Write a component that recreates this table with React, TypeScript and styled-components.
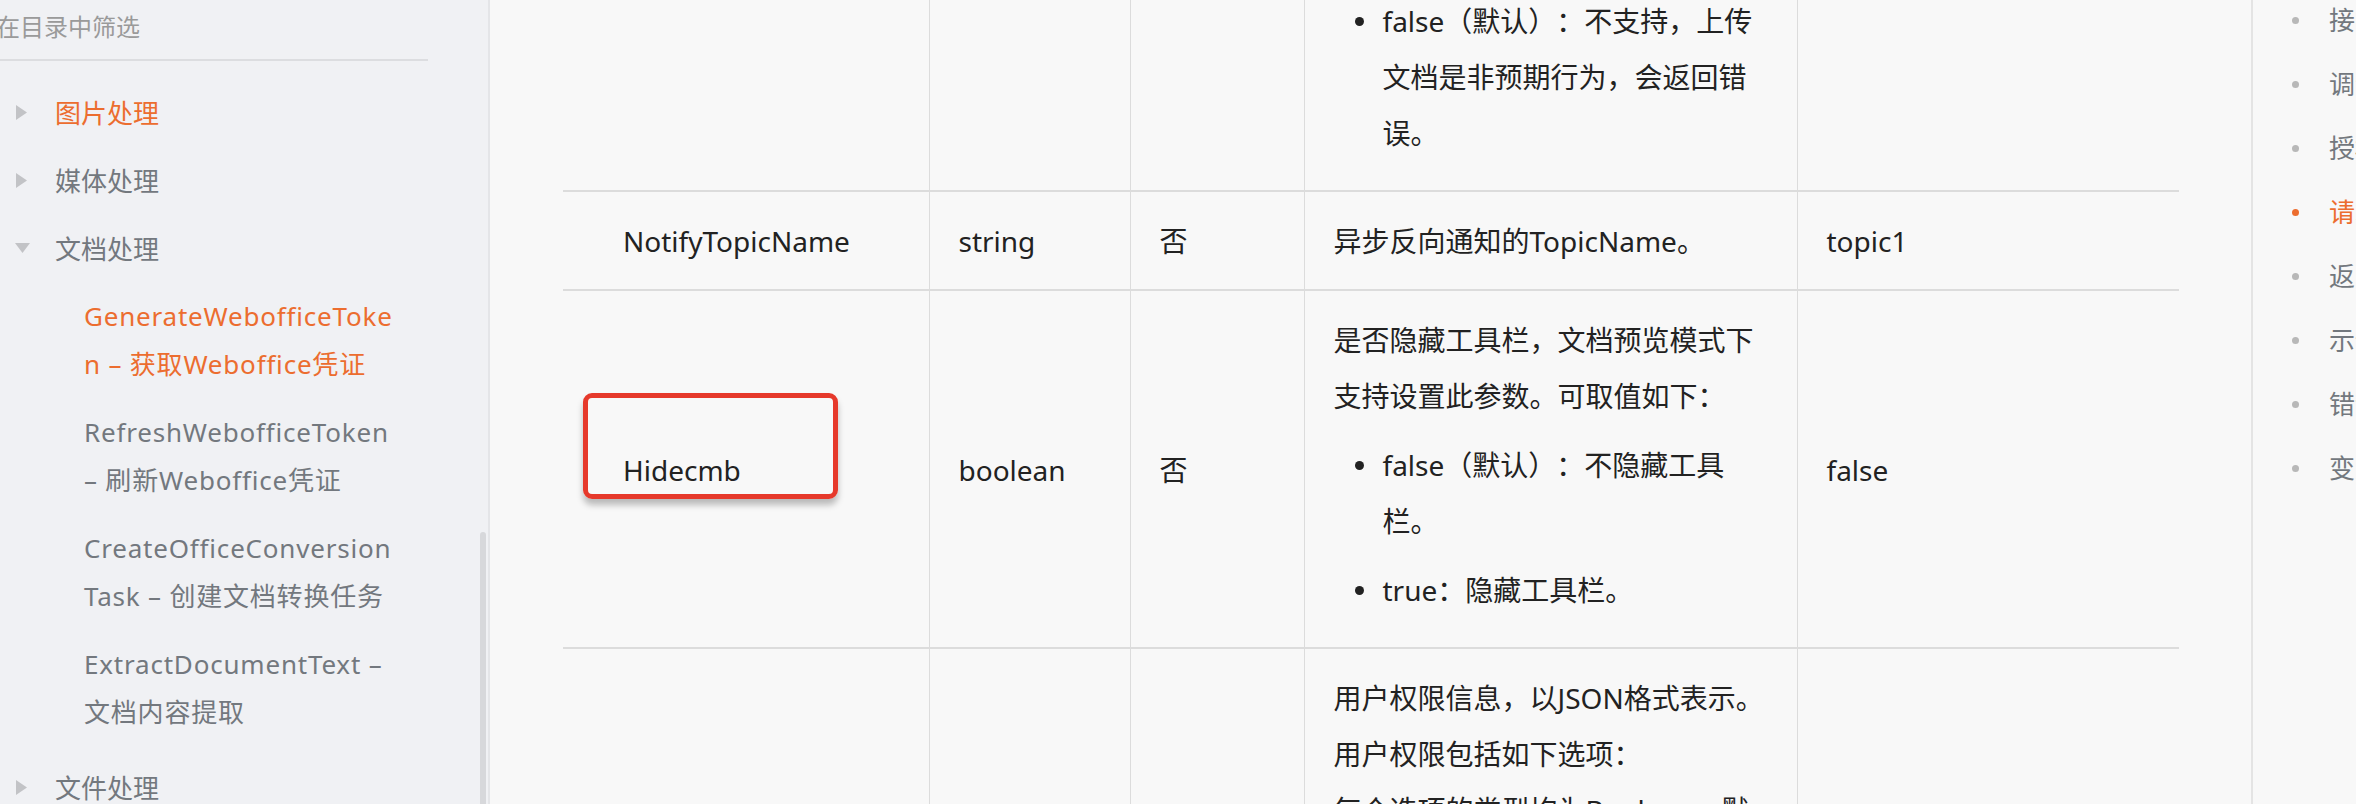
import styled, { createGlobalStyle } from "styled-components";

const GlobalStyle = createGlobalStyle`
    html, body {
        margin: 0;
        padding: 0;
    }
    body {
        font-family: "Noto Sans", "Noto Sans CJK SC", sans-serif;
        background: #f8f8f8;
        text-spacing-trim: space-all;
    }
`;

const ORANGE = "#ec6d2f";

const Page = styled.div`
    display: flex;
    width: 2356px;
    height: 804px;
    overflow: hidden;
    background: #f8f8f8;
`;

const Sidebar = styled.aside`
    position: relative;
    width: 490px;
    flex-shrink: 0;
    box-sizing: border-box;
    padding-right: 60px;
    background: #f0f1f4;
    border-right: 2px solid #e4e5e8;
`;

const Filter = styled.div`
    height: 61px;
    box-sizing: border-box;
    border-bottom: 2px solid #dcdde0;
    font-size: 24px;
    line-height: 54px;
    color: #9a9a9a;
    text-indent: -4px;
    white-space: nowrap;
`;

const Tree = styled.div`
    padding-top: 17px;
`;

const NodeRow = styled.div<{ $active?: boolean }>`
    display: flex;
    align-items: center;
    height: 68px;
    font-size: 26px;
    color: ${(p) => (p.$active ? ORANGE : "#73787e")};
`;

const Arrow = styled.span`
    display: flex;
    align-items: center;
    width: 55px;
    padding-left: 15px;
    box-sizing: border-box;
`;

const SubList = styled.div`
    padding-bottom: 7px;
`;

const SubItem = styled.div<{ $active?: boolean }>`
    padding: 10px 0 10px 84px;
    font-size: 26px;
    line-height: 48px;
    letter-spacing: 0.8px;
    white-space: nowrap;
    color: ${(p) => (p.$active ? ORANGE : "#73787e")};

    span {
        display: block;
    }
`;

const ScrollThumb = styled.div`
    position: absolute;
    right: 2px;
    top: 532px;
    bottom: 0;
    width: 6px;
    border-radius: 3px 3px 0 0;
    background: #d7d8db;
`;

const Main = styled.main`
    flex: 1;
    overflow: hidden;
    padding-left: 73px;
`;

const Table = styled.table`
    width: 1616px;
    margin-top: -41px;
    border-collapse: collapse;
    table-layout: fixed;
`;

const Row = styled.tr`
    border-bottom: 2px solid #dcdcdc;
`;

const Cell = styled.td<{ $first?: boolean }>`
    position: relative;
    vertical-align: middle;
    padding: 21px 29px 20px ${(p) => (p.$first ? "60px" : "29px")};
    font-size: 28px;
    line-height: 56px;
    color: #222;
    border-left: ${(p) => (p.$first ? "none" : "1px solid #dcdcdc")};
`;

const Para = styled.p`
    margin: 0;

    span {
        display: block;
    }
`;

const Bullets = styled.ul`
    list-style: none;
    margin: 13px 0 9px;
    padding-left: 49px;
`;

const Bullet = styled.li`
    position: relative;

    & + & {
        margin-top: 13px;
    }

    span {
        display: block;
    }

    &::before {
        content: "";
        position: absolute;
        left: -28px;
        top: 24px;
        width: 9px;
        height: 9px;
        border-radius: 50%;
        background: #222;
    }
`;

const Highlight = styled.div`
    position: absolute;
    left: 20px;
    top: 102px;
    width: 255px;
    height: 106px;
    box-sizing: border-box;
    border: 5px solid #e6392b;
    border-radius: 9px;
    box-shadow: 0 6px 6px rgba(0, 0, 0, 0.25);
`;

const Toc = styled.nav`
    width: 103px;
    flex-shrink: 0;
    border-left: 2px solid #e4e4e4;
    overflow: hidden;
`;

const TocList = styled.ul`
    list-style: none;
    margin: -12px 0 0;
    padding-left: 76px;
`;

const TocItem = styled.li<{ $active?: boolean }>`
    position: relative;
    font-size: 26px;
    line-height: 64px;
    white-space: nowrap;
    color: ${(p) => (p.$active ? ORANGE : "#73787e")};

    &::before {
        content: "";
        position: absolute;
        left: -37px;
        top: 29px;
        width: 7px;
        height: 7px;
        border-radius: 50%;
        background: ${(p) => (p.$active ? ORANGE : "#b8b8b8")};
    }
`;

const Triangle = ({ open }: { open?: boolean }) =>
    open ? (
        <svg width="15" height="11" viewBox="0 0 15 11">
            <polygon points="0,0 15,0 7.5,10" fill="#c2c3c6" />
        </svg>
    ) : (
        <svg width="12" height="15" viewBox="0 0 12 15" style={{ marginLeft: 1 }}>
            <polygon points="0,0 11,7.5 0,15" fill="#c2c3c6" />
        </svg>
    );

const subItems = [
    { lines: ["GenerateWebofficeToke", "n – 获取Weboffice凭证"], active: true },
    { lines: ["RefreshWebofficeToken", "– 刷新Weboffice凭证"] },
    { lines: ["CreateOfficeConversion", "Task – 创建文档转换任务"] },
    { lines: ["ExtractDocumentText –", "文档内容提取"] },
];

const tocItems = ["接口说明", "调试", "授权信息", "请求参数", "返回数据", "示例", "错误码", "变更历史"];

const App = () => {
    return (
        <Page>
            <GlobalStyle />
            <Sidebar>
                <Filter>在目录中筛选</Filter>
                <Tree>
                    <NodeRow $active>
                        <Arrow>
                            <Triangle />
                        </Arrow>
                        图片处理
                    </NodeRow>
                    <NodeRow>
                        <Arrow>
                            <Triangle />
                        </Arrow>
                        媒体处理
                    </NodeRow>
                    <NodeRow>
                        <Arrow>
                            <Triangle open />
                        </Arrow>
                        文档处理
                    </NodeRow>
                    <SubList>
                        {subItems.map((item) => (
                            <SubItem key={item.lines[0]} $active={item.active}>
                                {item.lines.map((l) => (
                                    <span key={l}>{l}</span>
                                ))}
                            </SubItem>
                        ))}
                    </SubList>
                    <NodeRow>
                        <Arrow>
                            <Triangle />
                        </Arrow>
                        文件处理
                    </NodeRow>
                </Tree>
                <ScrollThumb />
            </Sidebar>

            <Main>
                <Table>
                    <colgroup>
                        <col style={{ width: 366 }} />
                        <col style={{ width: 201 }} />
                        <col style={{ width: 174 }} />
                        <col style={{ width: 493 }} />
                        <col style={{ width: 382 }} />
                    </colgroup>
                    <tbody>
                        <Row>
                            <Cell $first />
                            <Cell />
                            <Cell />
                            <Cell>
                                <Bullets>
                                    <Bullet>
                                        <span>false（默认）：不支持，上传</span>
                                        <span>文档是非预期行为，会返回错</span>
                                        <span>误。</span>
                                    </Bullet>
                                </Bullets>
                            </Cell>
                            <Cell />
                        </Row>
                        <Row>
                            <Cell $first>NotifyTopicName</Cell>
                            <Cell>string</Cell>
                            <Cell>否</Cell>
                            <Cell>异步反向通知的TopicName。</Cell>
                            <Cell>topic1</Cell>
                        </Row>
                        <Row>
                            <Cell $first>
                                Hidecmb
                                <Highlight />
                            </Cell>
                            <Cell>boolean</Cell>
                            <Cell>否</Cell>
                            <Cell>
                                <Para>
                                    <span>是否隐藏工具栏，文档预览模式下</span>
                                    <span>支持设置此参数。可取值如下：</span>
                                </Para>
                                <Bullets>
                                    <Bullet>
                                        <span>false（默认）：不隐藏工具</span>
                                        <span>栏。</span>
                                    </Bullet>
                                    <Bullet>true：隐藏工具栏。</Bullet>
                                </Bullets>
                            </Cell>
                            <Cell>false</Cell>
                        </Row>
                        <Row>
                            <Cell $first />
                            <Cell />
                            <Cell />
                            <Cell>
                                <Para>
                                    <span>用户权限信息，以JSON格式表示。</span>
                                    <span>用户权限包括如下选项：</span>
                                    <span>每个选项的类型均为Boolean，默</span>
                                    <span>认值为false。</span>
                                </Para>
                            </Cell>
                            <Cell />
                        </Row>
                    </tbody>
                </Table>
            </Main>

            <Toc>
                <TocList>
                    {tocItems.map((t, i) => (
                        <TocItem key={t} $active={i === 3}>
                            {t}
                        </TocItem>
                    ))}
                </TocList>
            </Toc>
        </Page>
    );
};

export default App;
